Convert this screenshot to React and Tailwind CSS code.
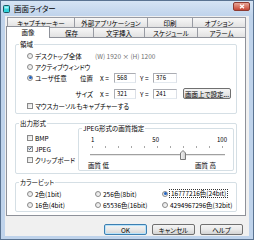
import React from "react";

function Radio({ checked }) {
  return (
    <span className="w-[6px] h-[6px] shrink-0 rounded-full border border-[#8a8a8a] bg-linear-to-br from-[#dcdcdc] to-[#ffffff] flex items-center justify-center">
      {checked && <span className="w-[3px] h-[3px] rounded-full bg-[#1f63c4]" />}
    </span>
  );
}

function Check({ checked }) {
  return (
    <span className="w-[6px] h-[6px] shrink-0 border border-[#8a8a8a] bg-linear-to-br from-[#dcdcdc] to-[#ffffff] flex items-center justify-center">
      {checked && (
        <svg width="5" height="5" viewBox="0 0 5 5">
          <path d="M0.6 2.6 L1.9 3.9 L4.4 0.9" fill="none" stroke="#21447a" strokeWidth="1.1" />
        </svg>
      )}
    </span>
  );
}

function GroupBox({ label, className = "", children }) {
  return (
    <div className={`relative border border-[#d5dfe5] rounded-[2px] ${className}`}>
      <span className="absolute -top-[5px] left-[3px] px-[1px] bg-white leading-[8px]">{label}</span>
      {children}
    </div>
  );
}

function Input({ value, w }) {
  return (
    <div className={`${w} h-[10px] bg-white border border-[#abadb3] border-b-[#e3e9ef] border-r-[#dbdfe6] pl-[2px] flex items-center text-[6px]`}>
      {value}
    </div>
  );
}

function Btn({ children, def, className = "" }) {
  return (
    <div
      className={`h-[11px] rounded-[2px] border flex items-center justify-center bg-linear-to-b from-[#f4f4f4] via-[#e9e9e9] to-[#d3d3d3] ${
        def ? "border-[#3c7fb1] shadow-[inset_0_0_0_1px_#b8e2fa]" : "border-[#707070]"
      } ${className}`}
    >
      {children}
    </div>
  );
}

const backTabs = [
  ["キャプチャーキー", "w-[67px]"],
  ["外部アプリケーション", "w-[73px]"],
  ["印刷", "w-[45px]"],
  ["オプション", "w-[54px] border-r"],
];

const frontTabs = [
  ["保存", "w-[43px] border-l-0"],
  ["文字挿入", "w-[51px]"],
  ["スケジュール", "w-[53px]"],
  ["アラーム", "w-[49px] border-r"],
];

export default function App() {
  const quality = 70;
  const thumbLeft = 2 + ((quality - 1) / 99) * 130 - 3;
  return (
    <div className="w-[254px] h-[240px] overflow-hidden bg-[#bfd3eb] border border-[#5a7391] flex flex-col font-['Noto_Sans_CJK_JP',sans-serif] [font-feature-settings:'palt'] text-[6.5px] leading-[8px] text-black">
      {/* title bar */}
      <div className="h-[15px] shrink-0 flex items-center pl-[2px] pr-[3px] bg-linear-to-b from-[#d6e4f4] to-[#bfd3eb]">
        <svg width="7" height="8" viewBox="0 0 7 8">
          <rect x="0.5" y="0.5" width="6" height="7" rx="1" fill="#2fd4dc" stroke="#1b5660" />
          <rect x="1.5" y="1.5" width="4" height="2" fill="#a6f4f6" />
        </svg>
        <span className="ml-[4px] text-[7.5px] leading-[9px]">画面ライター</span>
        <div className="ml-auto self-start mt-[1px] w-[17px] h-[9px] rounded-[2px] border border-[#8d3a31] bg-linear-to-b from-[#e8a496] to-[#c54434] flex items-center justify-center">
          <svg width="6" height="5" viewBox="0 0 6 5">
            <path d="M1 0.8 L5 4.2 M5 0.8 L1 4.2" stroke="#ffffff" strokeWidth="1.3" />
          </svg>
        </div>
      </div>

      {/* client area */}
      <div className="mx-[4px] h-[220px] shrink-0 bg-[#f0f0f0] flex flex-col">
        {/* back row of tabs */}
        <div className="mt-[1px] ml-[2px] h-[10px] flex">
          {backTabs.map(([t, c]) => (
            <div
              key={t}
              className={`${c} h-[10px] border-t border-l border-[#989ba3] bg-linear-to-b from-[#f7f7f7] to-[#e2e2e2] flex items-center justify-center`}
            >
              {t}
            </div>
          ))}
        </div>
        {/* front row of tabs */}
        <div className="ml-[1px] h-[10px] flex items-end">
          <div className="relative top-[1px] z-10 w-[44px] h-[12px] bg-white border-t border-x border-[#8e9199] flex items-start justify-center pt-[1px]">
            画像
          </div>
          {frontTabs.map(([t, c]) => (
            <div
              key={t}
              className={`${c} h-[10px] border-t border-l border-[#989ba3] bg-linear-to-b from-[#f7f7f7] to-[#e2e2e2] flex items-center justify-center`}
            >
              {t}
            </div>
          ))}
        </div>

        {/* panel */}
        <div className="ml-[1px] w-[240px] h-[179px] bg-white border border-[#8e9199] px-[8px] flex flex-col">
          {/* 領域 */}
          <GroupBox label="領域" className="mt-[6px] h-[70px] flex flex-col">
            <div className="mt-[5px] h-[11px] flex items-center">
              <div className="w-[79px] pl-[11px] flex items-center gap-[2px]">
                <Radio />
                <span>デスクトップ全体</span>
              </div>
              <span className="text-[#707070] text-[6.5px]">(W) 1920 × (H) 1200</span>
            </div>
            <div className="h-[11px] pl-[11px] flex items-center gap-[2px]">
              <Radio />
              <span>アクティブウィンドウ</span>
            </div>
            <div className="h-[11px] flex items-center">
              <div className="w-[56px] pl-[11px] flex items-center gap-[2px]">
                <Radio checked />
                <span>ユーザ任意</span>
              </div>
              <span className="w-[21px] text-right">位置</span>
              <span className="ml-[7px] w-[14px]">X =</span>
              <Input value="568" w="w-[22px]" />
              <span className="ml-[4px] w-[13px]">Y =</span>
              <Input value="376" w="w-[24px]" />
            </div>
            <div className="mt-[5px] h-[11px] flex items-center">
              <div className="w-[56px]" />
              <span className="w-[21px] text-right">サイズ</span>
              <span className="ml-[7px] w-[14px]">X =</span>
              <Input value="321" w="w-[22px]" />
              <span className="ml-[4px] w-[13px]">Y =</span>
              <Input value="241" w="w-[24px]" />
              <Btn className="ml-[6px] w-[48px]">画面上で設定...</Btn>
            </div>
            <div className="mt-[1px] h-[11px] pl-[11px] flex items-center gap-[2px]">
              <Check />
              <span>マウスカーソルもキャプチャーする</span>
            </div>
          </GroupBox>

          {/* 出力形式 */}
          <GroupBox label="出力形式" className="mt-[9px] h-[51px] flex">
            <div className="w-[62px] pt-[8px] flex flex-col">
              {[
                ["BMP", false],
                ["JPEG", true],
                ["クリップボード", false],
              ].map(([t, c]) => (
                <div key={t} className="h-[11px] pl-[11px] flex items-center gap-[2px]">
                  <Check checked={c} />
                  <span>{t}</span>
                </div>
              ))}
            </div>
            <GroupBox label="JPEG形式の画質指定" className="mt-[4px] w-[156px] h-[43px] flex flex-col">
              <div className="mt-[7px] ml-[12px] w-[136px] h-[8px] flex justify-between text-[6px]">
                <span>1</span>
                <span>50</span>
                <span>100</span>
              </div>
              <div className="mt-[2px] ml-[13px] w-[131px] h-[2px] flex justify-between">
                {Array.from({ length: 11 }).map((_, i) => (
                  <span key={i} className="w-[1px] h-[2px] bg-[#a8a8a8]" />
                ))}
              </div>
              <div className="relative mt-[2px] ml-[11px] w-[135px] h-[10px] flex items-center">
                <div className="w-full h-[2px] border-t border-[#a0a0a0] bg-[#e8e8e8]" />
                <svg
                  className="absolute top-0"
                  style={{ left: `${thumbLeft}px` }}
                  width="6"
                  height="10"
                  viewBox="0 0 6 10"
                >
                  <defs>
                    <linearGradient id="th" x1="0" y1="0" x2="1" y2="0">
                      <stop offset="0" stopColor="#f4f4f4" />
                      <stop offset="1" stopColor="#cfcfcf" />
                    </linearGradient>
                  </defs>
                  <path d="M3 0.5 L5.5 3 L5.5 9.5 L0.5 9.5 L0.5 3 Z" fill="url(#th)" stroke="#7a7a7a" />
                </svg>
              </div>
              <div className="mt-[1px] ml-[9px] mr-[17px] h-[8px] flex justify-between">
                <span>画質 低</span>
                <span>画質 高</span>
              </div>
            </GroupBox>
          </GroupBox>

          {/* カラービット */}
          <GroupBox label="カラービット" className="mt-[8px] h-[30px] pt-[5px] pl-[11px] grid grid-cols-[68px_67px_1fr] auto-rows-[11px]">
            {[
              ["2色(1bit)", false],
              ["256色(8bit)", false],
              ["16777216色(24bit)", true],
              ["16色(4bit)", false],
              ["65536色(16bit)", false],
              ["4294967296色(32bit)", false],
            ].map(([t, c]) => (
              <div key={t} className="flex items-center gap-[2px]">
                <Radio checked={c} />
                <span className={c ? "outline outline-1 outline-dotted outline-[#333] px-[1px] leading-[7px]" : ""}>{t}</span>
              </div>
            ))}
          </GroupBox>
        </div>

        {/* buttons */}
        <div className="mt-[8px] ml-[99px] flex gap-[5px]">
          <Btn def className="w-[43px]">OK</Btn>
          <Btn className="w-[43px]">キャンセル</Btn>
          <Btn className="w-[43px]">ヘルプ</Btn>
        </div>
      </div>
    </div>
  );
}
